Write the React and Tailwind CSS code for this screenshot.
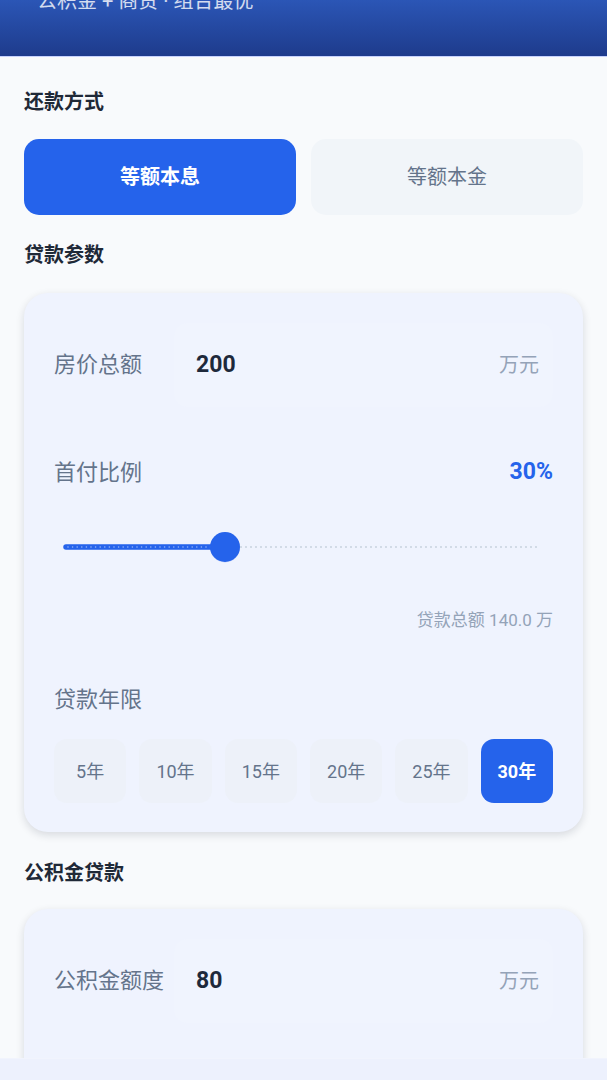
import { useState } from 'react';

const FONT = { fontFamily: 'Roboto, "Noto Sans CJK SC", "Noto Sans", sans-serif' };

const YEARS = [5, 10, 15, 20, 25, 30];

const SectionTitle = ({ children, className = '' }) => (
  <h2 className={`text-[20px] leading-[28px] font-bold text-[#1f2937] ${className}`}>
    {children}
  </h2>
);

const AmountRow = ({ label, value }) => (
  <div className="flex items-center h-[84px]">
    <span className="w-[120px] text-[22px] leading-[30px] text-[#64748b] shrink-0">{label}</span>
    <div className="flex-1 flex items-center h-full pl-[22px] pr-[14px] rounded-[14px] bg-[#f0f4fe]">
      <span className="flex-1 text-[23px] font-bold text-[#1e293b]">{value}</span>
      <span className="text-[20px] text-[#94a3b8]">万元</span>
    </div>
  </div>
);

// Down-payment slider: dotted track, filled part, round thumb.
const Slider = () => {
  const x1 = 12;
  const x2 = 487;
  const cx = 171;
  return (
    <svg viewBox="0 0 499 34" className="w-full h-[34px] block">
      <line x1={x1} y1="17" x2={x2} y2="17" stroke="#cbd5e1" strokeWidth="2.2" strokeLinecap="round" strokeDasharray="0 5" />
      <line x1={x1} y1="17" x2={cx} y2="17" stroke="#2563eb" strokeWidth="5.5" strokeLinecap="round" />
      <line x1={x1 + 2} y1="17" x2={cx - 4} y2="17" stroke="#93b4f5" strokeWidth="1.6" strokeLinecap="round" strokeDasharray="0 4.6" />
      <circle cx={cx} cy="17.5" r="15" fill="#1d4ed8" opacity="0.18" />
      <circle cx={cx} cy="17" r="15" fill="#2563eb" />
    </svg>
  );
};

export default function App() {
  const [method, setMethod] = useState('equal');
  const [years, setYears] = useState(30);

  return (
    <div style={FONT} className="min-h-[1080px] bg-[#f8fafc] relative">
      <header className="h-[57px] overflow-hidden bg-gradient-to-b from-[#2b56b6] to-[#1e3b8c] border-b border-[#c7d2fe]">
        <p className="-mt-[13px] ml-[37px] text-[20px] leading-[28px] text-white/80">
          公积金 + 商贷 · 组合最优
        </p>
      </header>

      <main className="px-[24px]">
        <SectionTitle className="mt-[31px]">还款方式</SectionTitle>
        <div className="mt-[23px] grid grid-cols-2 gap-[15px]">
          <button
            type="button"
            onClick={() => setMethod('equal')}
            className={`h-[76px] rounded-[15px] text-[20px] ${
              method === 'equal' ? 'bg-[#2563eb] text-white font-bold' : 'bg-[#f1f5f9] text-[#64748b]'
            }`}
          >
            等额本息
          </button>
          <button
            type="button"
            onClick={() => setMethod('principal')}
            className={`h-[76px] rounded-[15px] text-[20px] ${
              method === 'principal' ? 'bg-[#2563eb] text-white font-bold' : 'bg-[#f1f5f9] text-[#64748b]'
            }`}
          >
            等额本金
          </button>
        </div>

        <SectionTitle className="mt-[26px]">贷款参数</SectionTitle>
        <section className="mt-[24px] rounded-[24px] bg-[#eff3fe] shadow-[0_3px_8px_rgba(15,23,42,0.14)] px-[30px] pt-[30px] pb-[29px]">
          <AmountRow label="房价总额" value="200" />

          <div className="mt-[50px] flex items-center justify-between h-[30px]">
            <span className="text-[22px] text-[#64748b]">首付比例</span>
            <span className="text-[23px] font-bold text-[#2563eb]">30%</span>
          </div>

          <div className="mt-[43px]">
            <Slider />
          </div>

          <p className="mt-[44px] text-right text-[17px] leading-[24px] text-[#94a3b8]">
            贷款总额 140.0 万
          </p>

          <p className="mt-[53px] text-[22px] leading-[30px] text-[#64748b]">贷款年限</p>

          <div className="mt-[24px] flex gap-[13px]">
            {YEARS.map((y) => (
              <button
                key={y}
                type="button"
                onClick={() => setYears(y)}
                className={`flex-1 h-[64px] rounded-[13px] text-[18px] ${
                  years === y ? 'bg-[#2563eb] text-white font-bold' : 'bg-[#edf1f9] text-[#64748b]'
                }`}
              >
                {y}年
              </button>
            ))}
          </div>
        </section>

        <SectionTitle className="mt-[27px]">公积金贷款</SectionTitle>
        <section className="mt-[22px] rounded-[24px] bg-[#eff3fe] shadow-[0_3px_8px_rgba(15,23,42,0.14)] px-[30px] pt-[30px] pb-[120px]">
          <AmountRow label="公积金额度" value="80" />
        </section>
      </main>

      <div className="fixed left-0 right-0 bottom-0 h-[22px] bg-[#edf1fd] border-t border-[#f1f4fd]" />
    </div>
  );
}
